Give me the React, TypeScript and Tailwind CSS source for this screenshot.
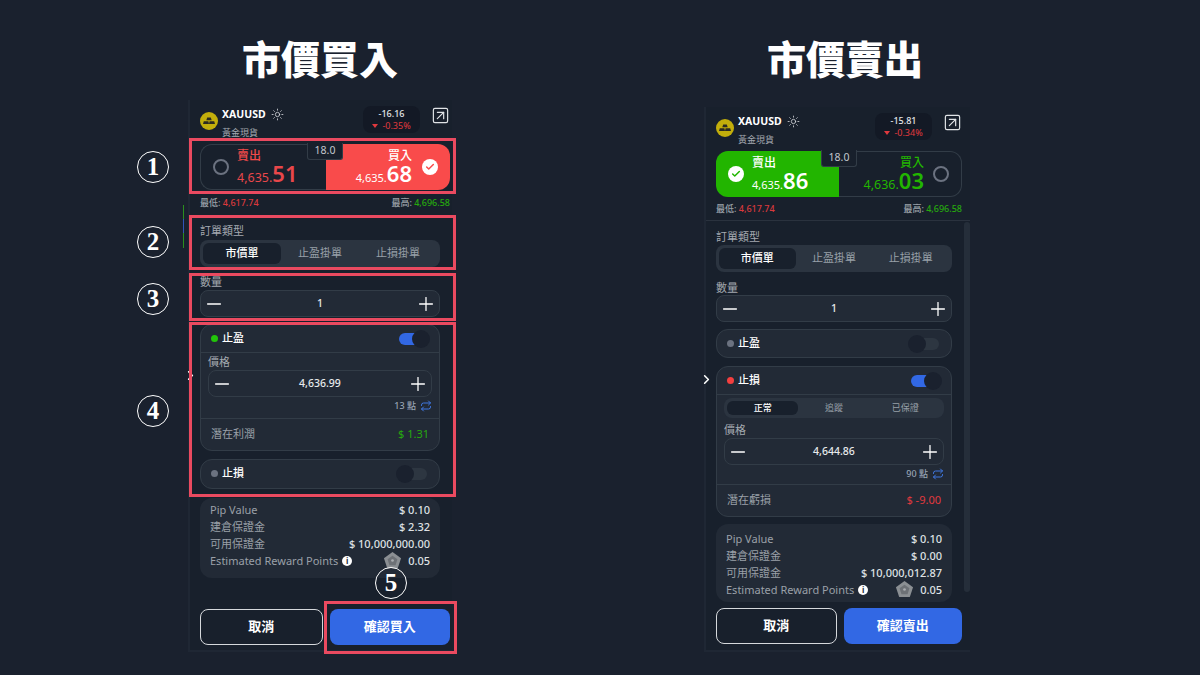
import React from 'react';
import { Minus, Plus, Sun, SquareArrowUpRight, Repeat, ChevronRight, Check } from 'lucide-react';

function GoldLogo() {
  return (
    <svg viewBox="0 0 18 18" className="w-[18px] h-[18px] shrink-0">
      <circle cx="9" cy="9" r="9" fill="#c2ae0b" />
      <path d="M7.2 5.6h3.6l.9 2.6H6.3zM3.8 9.2h4.6l.6 2.9H3zM9.6 9.2h4.6l.8 2.9H9z" fill="#2a2a22" />
    </svg>
  );
}

function RewardIcon() {
  return (
    <svg viewBox="0 0 20 20" className="w-[19px] h-[19px] -my-[2px]">
      <path d="M10 1l9 6.5-3.4 10.5H4.4L1 7.5z" fill="#8b8f93" />
      <path d="M10 5l5.2 3.8-2 6.1H6.8l-2-6.1z" fill="#6d7176" />
      <circle cx="10" cy="10" r="1.4" fill="#a9adb0" />
    </svg>
  );
}

function Radio() {
  return <div className="w-[16px] h-[16px] rounded-full border-2 border-[#6b7280] shrink-0" />;
}

function Checked({ color }: { color: string }) {
  return (
    <div className="w-[16px] h-[16px] rounded-full bg-white flex items-center justify-center shrink-0">
      <Check size={10} strokeWidth={3.5} color={color} />
    </div>
  );
}

function Header({ change, pct }: { change: string; pct: string }) {
  return (
    <div className="flex h-[44px] items-start">
      <div className="mt-[12px]"><GoldLogo /></div>
      <div className="ml-[4px] mt-[6px]">
        <div className="flex items-center gap-[5px] h-[16px]">
          <span className="text-[10.5px] font-bold text-white leading-none">XAUUSD</span>
          <Sun size={13} className="text-[#d5d8dc]" strokeWidth={1.5} />
        </div>
        <div className="text-[9px] text-[#a4a9b0] mt-[5px] leading-[12px]">黃金現貨</div>
      </div>
      <div className="ml-auto mt-[6px] w-[57px] h-[27px] rounded-lg bg-[#131925] flex flex-col items-center justify-center">
        <span className="text-[9px] font-medium text-[#e4e6e9] leading-[12px]">{change}</span>
        <span className="text-[9px] text-[#e0393e] leading-[11px] flex items-center gap-[4px]">
          <span className="w-0 h-0 border-x-[3px] border-x-transparent border-t-[4px] border-t-[#e0393e]" />
          {pct}
        </span>
      </div>
      <SquareArrowUpRight size={19} strokeWidth={1.5} className="ml-[11px] mt-[6px] text-[#e0e3e6]" />
    </div>
  );
}

function PriceBox({ side, buyPrice, sellPrice }: { side: 'buy' | 'sell'; buyPrice: [string, string]; sellPrice: [string, string] }) {
  const buy = side === 'buy';
  return (
    <div className="relative flex h-[46px]">
      {/* sell half */}
      <div className={buy
        ? 'flex-1 rounded-l-xl border border-r-0 border-[#323c47] flex items-center pl-[12px] gap-[8px]'
        : 'flex-1 rounded-l-xl bg-[#22b500] flex items-center pl-[12px] gap-[8px]'}>
        {buy ? <Radio /> : <Checked color="#22b500" />}
        <div>
          <div className={buy ? 'text-[12px] font-medium text-[#f04a4a] leading-[16px] mt-[1px]' : 'text-[12px] font-medium text-white leading-[16px] mt-[1px]'}>賣出</div>
          <div className={buy ? 'text-[#e9474a] leading-[20px] h-[24px] -mt-[1px]' : 'text-white leading-[20px] h-[24px] -mt-[1px]'}>
            <span className={buy ? 'text-[12.5px]' : 'text-[11px]'}>{sellPrice[0]}</span>
            <span className="text-[22px] font-semibold">{sellPrice[1]}</span>
          </div>
        </div>
      </div>
      {/* buy half */}
      <div className={buy
        ? 'flex-1 rounded-r-xl bg-[#f94b4b] flex items-center justify-end pr-[12px] gap-[10px]'
        : 'flex-1 rounded-r-xl border border-l-0 border-[#323c47] flex items-center justify-end pr-[12px] gap-[9px]'}>
        <div className="text-right">
          <div className={buy ? 'text-[12px] font-medium text-white leading-[16px] mt-[1px]' : 'text-[12px] font-medium text-[#22b500] leading-[16px] mt-[1px]'}>買入</div>
          <div className={buy ? 'text-white leading-[20px] h-[24px] -mt-[1px]' : 'text-[#22b500] leading-[20px] h-[24px] -mt-[1px]'}>
            <span className={buy ? 'text-[11px]' : 'text-[12.5px]'}>{buyPrice[0]}</span>
            <span className="text-[22px] font-semibold">{buyPrice[1]}</span>
          </div>
        </div>
        {buy ? <Checked color="#f94b4b" /> : <Radio />}
      </div>
      <div className="absolute left-1/2 -translate-x-[18px] -top-[1px] w-[36px] h-[17px] bg-[#18202c] border border-t-0 border-[#323c47] rounded-b-[3px] flex items-center justify-center text-[10.5px] text-[#c3c7cc]">18.0</div>
    </div>
  );
}

function LowHigh() {
  return (
    <div className="flex justify-between text-[9px] leading-[12px] font-medium">
      <span className="text-[#9aa0a8]">最低: <span className="text-[#d8393c]">4,617.74</span></span>
      <span className="text-[#9aa0a8]">最高: <span className="text-[#26a80e]">4,696.58</span></span>
    </div>
  );
}

function Segment({ items, small }: { items: string[]; small?: boolean }) {
  return (
    <div className={small
      ? 'flex h-[20px] rounded-lg bg-[#2b3440] p-[3px] text-[9px]'
      : 'flex h-[27px] rounded-lg bg-[#2b3440] p-[3px] text-[11px]'}>
      {items.map((item, i) => (
        <div key={item} className={i === 0
          ? 'flex-1 rounded-md bg-[#18202c] text-white font-medium flex items-center justify-center'
          : 'flex-1 text-[#98a0a8] flex items-center justify-center'}>
          {item}
        </div>
      ))}
    </div>
  );
}

function Stepper({ value }: { value: string }) {
  return (
    <div className="flex items-center justify-between h-[27px] rounded-lg bg-[#222a36] border border-[#323c47] px-[2px]">
      <Minus size={22} className="text-white" strokeWidth={1.4} />
      <span className="text-[10.5px] font-medium text-[#e8eaec]">{value}</span>
      <Plus size={22} className="text-white" strokeWidth={1.4} />
    </div>
  );
}

function Toggle({ on }: { on?: boolean }) {
  return on ? (
    <div className="relative w-[28px] h-[12px] rounded-full bg-[#3268e4]">
      <div className="absolute right-[-3px] top-[-3px] w-[18px] h-[18px] rounded-full bg-[#1a212e]" />
    </div>
  ) : (
    <div className="relative w-[28px] h-[12px] rounded-full bg-[#2d3641]">
      <div className="absolute left-[-3px] top-[-3px] w-[18px] h-[18px] rounded-full bg-[#1a212e]" />
    </div>
  );
}

function ToggleRow({ label, dot, on }: { label: string; dot: string; on?: boolean }) {
  return (
    <div className="flex items-center h-[27px] pl-[10px] pr-[12px]">
      <div className={'w-[7px] h-[7px] rounded-full ' + dot} />
      <span className="ml-[4px] text-[11px] font-medium text-white">{label}</span>
      <div className="ml-auto"><Toggle on={on} /></div>
    </div>
  );
}

function PointsRow({ points }: { points: string }) {
  return (
    <div className="flex items-center justify-end gap-[4px] h-[16px] text-[9px] font-medium text-[#98a4b4]">
      {points}
      <Repeat size={12} className="text-[#3f77e0]" />
    </div>
  );
}

function ResultRow({ label, value, color }: { label: string; value: string; color: string }) {
  return (
    <div className="flex items-center justify-between h-[32px] border-t border-[#323c47] px-[10px] text-[11px]">
      <span className="text-[#9aa0a8]">{label}</span>
      <span className={color}>{value}</span>
    </div>
  );
}

function Info({ margin }: { margin: string }) {
  const buy = margin === 'buy';
  return (
    <div className={buy
      ? 'rounded-xl bg-[#222a36] px-[10px] pt-[3px] pb-[9px] text-[11px] leading-[17px]'
      : 'rounded-xl bg-[#222a36] px-[10px] pt-[6px] pb-[4px] text-[11px] leading-[17px]'}>
      <div className="flex justify-between"><span className="text-[#9aa0a8]">Pip Value</span><span className="text-[#dfe1e4] font-medium">$ 0.10</span></div>
      <div className="flex justify-between"><span className="text-[#9aa0a8]">建倉保證金</span><span className="text-[#dfe1e4] font-medium">{buy ? '$ 2.32' : '$ 0.00'}</span></div>
      <div className="flex justify-between"><span className="text-[#9aa0a8]">可用保證金</span><span className="text-[#dfe1e4] font-medium">{buy ? '$ 10,000,000.00' : '$ 10,000,012.87'}</span></div>
      <div className="flex items-center h-[17px]">
        <span className="text-[#9aa0a8]">Estimated Reward Points</span>
        <span className="ml-[4px] w-[10px] h-[10px] rounded-full bg-white text-[#222a36] text-[8px] font-bold flex items-center justify-center leading-none">i</span>
        <span className="ml-auto flex items-center h-[17px]"><RewardIcon /></span>
        <span className="ml-[6px] text-[#dfe1e4] font-medium">0.05</span>
      </div>
    </div>
  );
}

function Buttons({ label }: { label: string }) {
  return (
    <div className="flex gap-[7px] h-[36px]">
      <div className="flex-1 rounded-lg border border-[#d5d8dc] flex items-center justify-center text-[13px] font-bold text-white">取消</div>
      <div className="flex-1 rounded-lg bg-[#3268e4] flex items-center justify-center text-[13px] font-bold text-white">{label}</div>
    </div>
  );
}

function Mark({ n, className }: { n: string; className: string }) {
  return (
    <div className={'absolute w-[32px] h-[32px] rounded-full border-[1.5px] border-white flex items-center justify-center text-white text-[25px] font-bold font-["Liberation_Serif",serif] ' + className}>
      {n}
    </div>
  );
}

function Tab({ className }: { className: string }) {
  return <div className={'absolute border-[3px] border-[#ea4a60] ' + className} />;
}

export default function App() {
  return (
    <div className="relative w-[1200px] h-[675px] overflow-hidden bg-[#1a212e] flex font-['Noto_Sans','Noto_Sans_CJK_TC',sans-serif]">
      {/* Market buy */}
      <div className="ml-[188px] w-[264px] shrink-0">
        <div className="h-[100px] pt-[33px] text-center text-[39px] leading-[48px] font-black text-white font-['Noto_Sans_CJK_TC',serif]">市價買入</div>
        <div className="h-[552px] border-l-2 border-b-2 border-[#1f2734] bg-[#18202c] pl-[10px] pr-[2px]">
          <Header change="-16.16" pct="-0.35%" />
          <PriceBox side="buy" sellPrice={['4,635.', '51']} buyPrice={['4,635.', '68']} />
          <div className="mt-[7px]"><LowHigh /></div>
          <div className="mr-[10px]">
            <div className="mt-[15px] text-[11px] leading-[14px] text-[#a4a9b0]">訂單類型</div>
            <div className="mt-[2px]"><Segment items={['市價單', '止盈掛單', '止損掛單']} /></div>
            <div className="mt-[8px] text-[11px] leading-[14px] text-[#a4a9b0]">數量</div>
            <div className="mt-[1px]"><Stepper value="1" /></div>
            <div className="mt-[7px] rounded-xl border border-[#323c47] bg-[#222a36]">
              <ToggleRow label="止盈" dot="bg-[#22c40a]" on />
              <div className="border-t border-[#323c47] px-[7px] pt-[1px]">
                <div className="text-[11px] leading-[16px] text-[#a4a9b0]">價格</div>
                <Stepper value="4,636.99" />
                <div className="mt-[1px] mb-[4px]"><PointsRow points="13 點" /></div>
              </div>
              <ResultRow label="潛在利潤" value="$ 1.31" color="text-[#26a80e]" />
            </div>
            <div className="mt-[8px] pb-px rounded-xl border border-[#323c47] bg-[#222a36]">
              <ToggleRow label="止損" dot="bg-[#6b7280]" />
            </div>
            <div className="mt-[9px]"><Info margin="buy" /></div>
          </div>
          <div className="mt-[31px]"><Buttons label="確認買入" /></div>
        </div>
      </div>

      {/* Market sell */}
      <div className="ml-[252px] w-[282px] shrink-0">
        <div className="h-[107px] pt-[33px] text-center text-[39px] leading-[48px] font-black text-white font-['Noto_Sans_CJK_TC',serif]">市價賣出</div>
        <div className="w-[266px] h-[545px] border-l-2 border-b-2 border-[#1f2734] bg-[#18202c] pl-[10px] pr-[8px] relative">
          <Header change="-15.81" pct="-0.34%" />
          <PriceBox side="sell" sellPrice={['4,635.', '86']} buyPrice={['4,636.', '03']} />
          <div className="mt-[6px]"><LowHigh /></div>
          <div className="mt-[5px] -ml-[10px] -mr-[8px] border-t border-[#2a323e]" />
          <div className="mr-[10px]">
            <div className="mt-[9px] text-[11px] leading-[14px] text-[#a4a9b0]">訂單類型</div>
            <div className="mt-[1px]"><Segment items={['市價單', '止盈掛單', '止損掛單']} /></div>
            <div className="mt-[9px] text-[11px] leading-[14px] text-[#a4a9b0]">數量</div>
            <div><Stepper value="1" /></div>
            <div className="mt-[7px] rounded-xl border border-[#323c47] bg-[#222a36]">
              <ToggleRow label="止盈" dot="bg-[#6b7280]" />
            </div>
            <div className="mt-[8px] rounded-xl border border-[#323c47] bg-[#222a36]">
              <ToggleRow label="止損" dot="bg-[#f43f3f]" on />
              <div className="border-t border-[#323c47] px-[7px] pt-[3px]">
                <Segment small items={['正常', '追蹤', '已保證']} />
                <div className="mt-[4px] text-[11px] leading-[16px] text-[#a4a9b0]">價格</div>
                <Stepper value="4,644.86" />
                <div className="mt-[1px] mb-[2px]"><PointsRow points="90 點" /></div>
              </div>
              <ResultRow label="潛在虧損" value="$ -9.00" color="text-[#e0393e]" />
            </div>
            <div className="mt-[7px]"><Info margin="sell" /></div>
          </div>
          <div className="mt-[6px]"><Buttons label="確認賣出" /></div>
          <div className="absolute right-0 top-[115px] w-[6px] h-[370px] rounded-full bg-[#252e3a]" />
        </div>
      </div>

      {/* chart remnant beside the buy panel */}
      <div className="absolute left-[183px] top-[205px] w-px flex flex-col">
        <div className="h-[14px] bg-[#2a8f1e]" />
        <div className="h-[14px] bg-[#2f55b8]" />
        <div className="h-[15px] bg-[#2a8f1e]" />
      </div>

      {/* panel collapse handles */}
      <ChevronRight size={15} strokeWidth={2.5} className="absolute left-[183px] top-[368px] text-white" />
      <ChevronRight size={15} strokeWidth={2.5} className="absolute left-[699px] top-[372px] text-white" />

      {/* annotations */}
      <Tab className="left-[189px] top-[138px] w-[267px] h-[56px]" />
      <Tab className="left-[189px] top-[215px] w-[267px] h-[55px]" />
      <Tab className="left-[189px] top-[273px] w-[267px] h-[48px]" />
      <Tab className="left-[189px] top-[322px] w-[267px] h-[175px]" />
      <Tab className="left-[324px] top-[601px] w-[133px] h-[53px]" />
      <Mark n="1" className="left-[137px] top-[151px]" />
      <Mark n="2" className="left-[137px] top-[226px]" />
      <Mark n="3" className="left-[137px] top-[283px]" />
      <Mark n="4" className="left-[137px] top-[395px]" />
      <Mark n="5" className="left-[375px] top-[567px]" />
    </div>
  );
}
